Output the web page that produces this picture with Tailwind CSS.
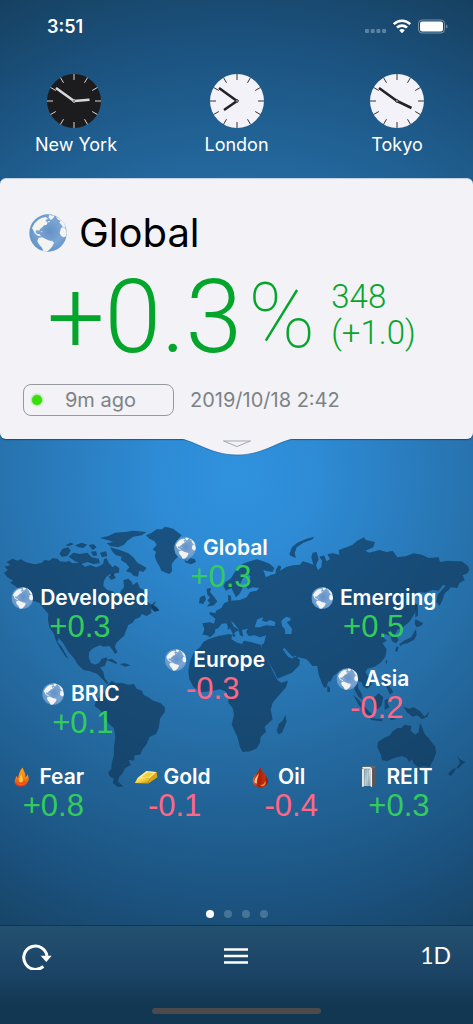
<!DOCTYPE html>
<html lang="en">
<head>
<meta charset="utf-8">
<meta name="viewport" content="width=device-width, initial-scale=1">
<title>Global Markets</title>
<script src="https://cdn.jsdelivr.net/npm/@tailwindcss/browser@4"></script>
</head>
<body class="bg-[#123752]">
<svg width="0" height="0" class="absolute" aria-hidden="true">
  <defs>
    <radialGradient id="sea" cx="55%" cy="45%" r="55%">
      <stop offset="0" stop-color="#6491c6"/><stop offset=".6" stop-color="#7ba6d4"/><stop offset="1" stop-color="#6396c8"/>
    </radialGradient>
    <linearGradient id="flameFill" x1="0" y1="0" x2="0" y2="1"><stop offset="0" stop-color="#f9a21b"/><stop offset=".5" stop-color="#f58a1c"/><stop offset="1" stop-color="#e02a10"/></linearGradient>
    <linearGradient id="goldFront" x1="0" y1="0" x2="1" y2="1"><stop offset="0" stop-color="#fff6a8"/><stop offset=".5" stop-color="#f4cf3a"/><stop offset="1" stop-color="#b8860b"/></linearGradient>
    <linearGradient id="dropFill" x1="0" y1="0" x2="1" y2="0"><stop offset="0" stop-color="#e8622a"/><stop offset=".4" stop-color="#a81c08"/><stop offset=".8" stop-color="#c2330f"/><stop offset="1" stop-color="#7a1204"/></linearGradient>
    <linearGradient id="glass" x1="0" y1="0" x2="1" y2="1"><stop offset="0" stop-color="#8fb4c8"/><stop offset=".5" stop-color="#c8dde6"/><stop offset="1" stop-color="#7d9cab"/></linearGradient>
    <symbol id="globe" viewBox="0 0 114 114">
      <circle cx="57" cy="57" r="56" fill="url(#sea)"/>
      <g fill="#f3f3f2">
        <path d="M9 42 17 28 28 17 38 12 50 9 57 14 49 19 56 26 52 33 45 34 40 40 34 44 30 50 22 48 20 54 24 60 32 61 36 67 26 65 17 58 13 49z"/>
        <path d="M60 3 77 5 73 12 66 18 59 12zM80 7 94 15 105 27 110 41 101 38 96 31 91 25 95 20 87 17zM96 42 104 39 110 45 113 57 110 68 103 70 96 65 92 57z"/>
        <path d="M28 72 39 70 50 75 58 79 71 82 75 87 69 98 61 107 53 113 43 111 39 101 30 91 25 82z"/>
        <path d="M35 51l8 3-6 1zM56 21l7 1-3 4z"/>
      </g>
    </symbol>
    <symbol id="ticks" viewBox="0 0 54 54">
      <g stroke-width="1" fill="none">
        <path d="M27 0v6M27 48v6M0 27h6M48 27h6M13.5 3.600l3 5.200M40.500 3.600l-3 5.200M13.500 50.400l3-5.200M40.500 50.400l-3-5.200M3.600 13.500l5.200 3M3.600 40.500l5.200-3M50.400 13.500l-5.200 3M50.400 40.500l-5.200-3"/>
      </g>
    </symbol>
  </defs>
</svg>

<main class="flex min-h-screen flex-col bg-[radial-gradient(circle_580px_at_50%_475px,#3092de_0%,#2e8bd5_14%,#256ca3_48%,#1c5583_72%,#174467_88%,#123752_100%)] font-['Inter','Liberation_Sans',sans-serif] text-white">

  <header class="flex h-[53px] items-center justify-between pr-[25px] pl-[47px]">
    <time class="text-lg font-semibold">3:51</time>
    <svg class="h-5 w-[84px]" viewBox="0 0 84 20" role="img" aria-label="Wi-Fi on, battery full">
      <g fill="#fff" fill-opacity=".3"><rect x="1" y="12" width="4" height="4" rx="1"/><rect x="6.700" y="12" width="4" height="4" rx="1"/><rect x="12.400" y="12" width="4" height="4" rx="1"/><rect x="18.100" y="12" width="4" height="4" rx="1"/></g>
      <g fill="none" stroke="#fff" stroke-width="2.600"><path d="M29.800 7.200a11.500 11.500 0 0 1 16.400 0M33 10.700a7 7 0 0 1 10 0"/></g>
      <path d="M35.200 13.300a4 4 0 0 1 5.600 0L38 16.200z" fill="#fff"/>
      <rect x="54.500" y="3" width="26" height="13" rx="3.500" fill="none" stroke="#fff" stroke-opacity=".4"/>
      <rect x="56" y="4.500" width="23" height="10" rx="2.200" fill="#fff"/>
      <path d="M82 7.500v4q1.500-.5 1.500-2T82 7.500z" fill="#fff" fill-opacity=".4"/>
    </svg>
  </header>

  <section class="flex h-[125px] justify-between px-[26px] pt-[21px]" aria-label="World clocks">
    <figure class="flex w-[100px] flex-col items-center">
      <svg class="mr-1 size-[54px]" viewBox="0 0 54 54" aria-hidden="true"><circle cx="27" cy="27" r="27" fill="#1c1c1f"/><use href="#ticks" stroke="#d8d8d8"/><path d="M27 27 9 14M27 27l15.500-1.200" stroke="#d9d7dc" stroke-width="2.600"/><circle cx="27" cy="27" r="1.300" fill="#1c1c1f" stroke="#d9d7dc"/></svg>
      <figcaption class="mt-[5px] text-lg leading-6 whitespace-nowrap">New York</figcaption>
    </figure>
    <figure class="flex w-[100px] flex-col items-center">
      <svg class="size-[54px]" viewBox="0 0 54 54" aria-hidden="true"><circle cx="27" cy="27" r="27" fill="#f3f2f8"/><use href="#ticks" stroke="#333"/><path d="M27 27 9 14M27 27 14 36" stroke="#222224" stroke-width="2.600"/><circle cx="27" cy="27" r="1.300" fill="#fff" stroke="#222"/></svg>
      <figcaption class="mt-[5px] text-lg leading-6">London</figcaption>
    </figure>
    <figure class="flex w-[100px] flex-col items-center">
      <svg class="size-[54px]" viewBox="0 0 54 54" aria-hidden="true"><circle cx="27" cy="27" r="27" fill="#f3f2f8"/><use href="#ticks" stroke="#333"/><path d="M27 27 9 14M27 27l14.500 7" stroke="#222224" stroke-width="2.600"/><circle cx="27" cy="27" r="1.300" fill="#fff" stroke="#222"/></svg>
      <figcaption class="mt-[5px] text-lg leading-6">Tokyo</figcaption>
    </figure>
  </section>

  <article class="relative h-[261px] rounded-md border-t border-[#c3d1df] bg-[#f2f2f7] px-[23px] pt-7 shadow-[0_1px_1px_rgba(0,0,0,0.35)]">
    <div class="flex items-center gap-3 pl-[6px]">
      <svg class="size-[38px]" aria-hidden="true"><use href="#globe"/></svg>
      <h1 class="text-[40px] leading-[52px] text-black">Global</h1>
    </div>
    <div class="mt-2 flex h-[100px] items-center pl-6 font-['Roboto','Liberation_Sans',sans-serif] font-light text-[#04a52b]">
      <span class="text-[102px] leading-[100px]">+0.3</span>
      <span class="ml-[6px] text-[90px] leading-[100px] font-thin">%</span>
      <p class="ml-4 pb-1 text-[33px] leading-[36px]"><span class="block">348</span><span class="block">(+1.0)</span></p>
    </div>
    <div class="mt-[17px] flex items-center gap-4 text-xl text-[#7c8386]">
      <button class="relative h-8 w-[151px] rounded-lg border border-[#969a9e] pl-1 leading-none">
        <span class="absolute top-[10px] left-2 size-[10px] rounded-full bg-[#3ade0c] shadow-[0_0_3px_#3ade0c]"></span>9m ago</button>
      <time>2019/10/18 2:42</time>
    </div>
    <button class="absolute top-full left-1/2 -mt-px h-[19px] w-[126px] -translate-x-1/2" aria-label="Expand">
      <svg class="size-full overflow-visible" viewBox="0 0 126 19"><path d="M0 0C20 0 34 17 63 17S106 0 126 0z" fill="#f2f2f7"/><path d="M0 .5C20 .5 34 17 63 17S106 .5 126 .5" fill="none" stroke="#1e5f96" stroke-opacity=".6"/><path d="M0 -1h126v2H0z" fill="#f2f2f7"/><path d="M49.500 3h27L63 8.500z" fill="none" stroke="#a3a7af"/></svg>
    </button>
  </article>

  <section class="flex-1 pt-[71px]" aria-label="Markets">
    <div class="relative">
      <svg class="w-full" viewBox="0 0 473 310" aria-hidden="true">
        <g fill="#0f3556" fill-opacity=".66" fill-rule="evenodd">
          <g transform="scale(.33333)">
            <path d="M12 188 24 180 13 170 32 166 20 156 38 146 52 152 62 148 78 157 105 163 125 158 134 150 148 152 158 144 172 146 180 154 198 156 206 152 218 160 240 158 255 170 270 165 288 172 303 166 310 160 312 148 320 144 326 158 338 172 345 166 358 174 357 188 345 190 336 200 330 192 318 202 312 212 310 228 322 240 338 244 350 254 358 264 364 260 360 246 372 232 370 210 385 206 395 215 398 225 412 216 420 235 432 240 436 252 446 262 438 272 455 284 470 290 478 303 462 304 452 296 455 308 440 318 425 312 420 322 405 328 398 338 385 345 378 362 372 378 362 386 348 400 345 412 352 426 345 432 336 418 328 408 310 410 300 406 280 414 268 425 266 442 272 458 285 464 298 458 305 446 322 442 320 454 314 468 300 472 310 486 314 505 325 518 320 522 308 508 292 492 270 484 250 480 232 462 222 445 210 432 200 418 190 400 176 384 172 396 186 412 196 430 206 446 198 442 186 424 176 408 166 388 162 372 148 352 144 330 145 312 132 296 118 278 90 270 78 256 60 240 46 228 30 218 40 212 22 202z"/>
            <path d="M178 132 188 116 205 112 212 122 202 138 186 140zM206 140 220 128 240 132 262 128 275 142 296 146 300 160 280 162 262 156 245 162 225 154zM196 106 212 98 222 102 208 108zM225 106 245 98 262 104 250 114 235 112zM266 106 280 102 290 112 278 120zM300 84 325 78 345 68 375 66 400 62 440 66 425 76 400 80 382 92 372 104 355 112 330 108 320 100 340 96 322 90zM272 125 288 124 292 136 280 138zM330 112 360 120 385 130 400 142 412 158 425 165 440 174 430 186 418 182 414 200 402 198 392 188 378 184 388 172 378 160 362 150 365 140 348 136 338 126zM300 128 318 124 322 138 306 142zM325 200 340 192 348 204 334 210zM452 286 468 272 462 288 478 300 464 306z"/>
            <path d="M438 76 455 68 470 58 486 58 495 50 520 56 532 66 545 76 534 88 546 96 532 108 540 120 525 130 534 140 524 150 515 162 516 184 508 192 498 188 484 182 478 168 470 155 464 138 468 126 458 118 470 106 464 94 448 86z"/>
            <path d="M552 150 562 154 572 144 585 148 588 156 574 163 558 158zM318 450 335 446 352 458 348 462 330 454zM358 462 375 460 392 466 376 470z"/>
          </g>
          <path transform="translate(0 150) scale(.33333)" d="M322 76 335 62 348 70 365 68 385 74 402 72 410 86 425 92 432 106 445 112 460 122 480 128 495 142 494 156 480 176 476 205 468 222 448 232 440 252 428 268 420 284 404 286 402 302 386 300 392 315 376 324 366 342 358 350 354 364 370 380 352 380 338 368 342 356 330 350 324 336 334 328 335 310 342 285 342 260 346 230 342 205 325 190 312 165 300 150 284 138 288 120 300 112 312 98z"/>
          <g transform="translate(160 50) scale(.33333)">
            <path d="M128 224 133 206 127 190 150 187 162 191 166 176 148 162 150 156 166 160 168 152 184 144 192 130 205 124 204 104 213 108 214 122 240 120 260 112 270 96 290 92 298 84 278 82 264 88 256 78 262 62 272 50 262 40 248 56 240 72 248 84 240 100 228 112 222 100 214 84 198 92 190 78 196 66 212 56 222 40 235 22 252 10 270 4 290 -2 310 4 330 12 343 24 338 36 322 34 310 30 318 52 334 44 346 42 348 28 356 16 364 20 360 32 380 20 400 16 420 14 428 4 444 8 460 14 454 -8 458 -22 470 -24 476 -2 468 16 474 30 484 22 486 2 478 -10 492 -14 500 4 510 -2 502 -18 520 -20 538 -16 536 -30 560 -38 578 -46 592 -58 612 -68 618 -60 645 -54 640 -38 616 -28 628 -22 658 -30 680 -24 698 -28 712 -8 740 -12 760 -20 786 -16 806 -6 836 -8 840 6 862 2 888 4 905 4 924 18 928 30 922 40 908 46 914 60 898 70 892 84 872 82 866 90 854 100 846 124 838 138 829 126 832 106 848 88 858 76 848 76 836 92 818 90 796 98 776 96 758 112 760 128 774 134 764 160 750 184 730 200 712 210 706 222 716 240 708 250 696 244 692 228 676 222 668 230 680 242 668 250 680 268 676 290 662 308 644 320 622 326 616 336 630 356 636 374 622 386 610 380 604 366 594 364 594 384 606 402 608 420 596 412 584 390 580 368 568 352 564 334 552 326 538 334 520 348 512 364 504 366 498 384 490 380 476 344 472 318 458 318 440 298 415 292 398 290 386 278 374 264 368 268 384 290 398 296 404 286 420 300 418 316 396 338 352 356 345 340 325 304 308 272 304 254 312 250 318 226 300 232 284 226 266 228 258 216 264 206 246 210 250 230 240 226 234 206 222 190 212 182 222 200 238 210 226 216 220 224 208 200 198 190 184 192 176 204 166 208 164 220 150 232 140 226zM284 202 292 178 310 172 306 182 318 186 330 180 346 186 344 198 318 196 300 202zM364 182 378 170 392 174 390 182 380 186 396 206 394 222 376 222 374 206 366 198z"/>
            <path d="M140 86 154 84 150 96 160 108 172 124 162 136 140 140 150 128 142 122 150 112 142 104zM120 112 134 106 138 118 130 132 117 130zM203 194h6v14h-6zM214 222l14 2-6 8z"/>
            <path d="M388 -18 396 -38 412 -52 440 -64 462 -70 458 -62 430 -52 410 -38 404 -20 408 -6 392 -12z"/>
            <path d="M144 238 175 228 208 222 216 226 214 238 232 248 246 252 252 242 272 246 302 254 310 275 325 305 338 332 352 360 364 368 384 362 378 382 355 408 338 428 332 450 338 478 314 500 318 515 302 530 300 548 290 565 270 574 248 576 240 562 232 530 215 494 222 464 218 444 205 428 206 410 196 394 180 388 150 394 120 397 100 380 88 358 85 334 90 304 102 276 120 262 130 246z"/>
            <path d="M376 464 380 484 366 518 356 523 350 512 356 492 368 482zM502 376 510 384 510 396 502 396z"/>
            <path d="M766 128 774 144 774 168 766 172zM766 178 776 182 790 190 782 198 770 202 764 192zM768 208 770 224 762 240 742 250 730 252 720 258 718 252 736 240 754 232 762 216zM708 262 716 260 712 276 706 274zM676 304 682 300 680 314z"/>
          </g>
          <g transform="translate(290 90) scale(.33333)">
            <path d="M190 286 204 296 222 318 236 334 250 346 244 352 224 338 206 314zM246 298 266 280 280 292 274 318 262 328 250 318zM284 300 300 294 292 308 298 322 284 330zM240 354 278 358 276 364 244 360zM280 220 288 240 300 262 310 276 300 284 290 262 276 240z"/>
            <path d="M340 320 356 326 372 322 390 334 404 350 418 334 412 350 396 358 382 346 368 350 350 336zM300 350l20 8-18 2z"/>
            <path d="M264 426 262 442 272 462 276 480 290 484 312 474 336 468 350 474 358 486 366 478 370 490 384 502 402 498 418 502 430 480 438 460 436 440 424 426 416 414 404 402 396 380 390 370 386 396 376 404 362 392 364 378 344 374 334 384 322 384 308 394 300 406 282 414z" transform="translate(0 0)"/>
            <path d="M502 468 510 478 526 486 514 496 504 506 500 502 510 488zM500 504 492 516 482 528 474 522 488 508zM382 506l14 4-6 10z"/>
          </g>
        </g>
      </svg>

      <div class="text-[21px] leading-6 font-semibold [text-shadow:0_1px_2px_rgba(0,20,50,0.7)]">
        <button class="absolute top-[26px] left-[46.7%] flex -translate-x-1/2 flex-col items-center">
          <span class="flex items-center gap-[7px]"><svg class="size-[22px]"><use href="#globe"/></svg>Global</span>
          <span class="font-['Liberation_Sans',sans-serif] text-[31px] leading-[34px] font-normal text-[#33cc5a]">+0.3</span>
        </button>
        <button class="absolute top-[76px] left-[16.9%] flex -translate-x-1/2 flex-col items-center">
          <span class="flex items-center gap-[7px]"><svg class="size-[22px]"><use href="#globe"/></svg>Developed</span>
          <span class="font-['Liberation_Sans',sans-serif] text-[31px] leading-[34px] font-normal text-[#33cc5a]">+0.3</span>
        </button>
        <button class="absolute top-[76px] left-[79%] flex -translate-x-1/2 flex-col items-center">
          <span class="flex items-center gap-[7px]"><svg class="size-[22px]"><use href="#globe"/></svg>Emerging</span>
          <span class="font-['Liberation_Sans',sans-serif] text-[31px] leading-[34px] font-normal text-[#33cc5a]">+0.5</span>
        </button>
        <button class="absolute top-[138px] left-[45.4%] flex -translate-x-1/2 flex-col items-center">
          <span class="flex items-center gap-[7px]"><svg class="size-[22px]"><use href="#globe"/></svg>Europe</span>
          <span class="pr-1 font-['Liberation_Sans',sans-serif] text-[31px] leading-[34px] font-normal text-[#ff6785]">-0.3</span>
        </button>
        <button class="absolute top-[172px] left-[17.1%] flex -translate-x-1/2 flex-col items-center">
          <span class="flex items-center gap-[7px]"><svg class="size-[22px]"><use href="#globe"/></svg>BRIC</span>
          <span class="pl-1 font-['Liberation_Sans',sans-serif] text-[31px] leading-[34px] font-normal text-[#33cc5a]">+0.1</span>
        </button>
        <button class="absolute top-[157px] left-[78.8%] flex -translate-x-1/2 flex-col items-center">
          <span class="flex items-center gap-[7px]"><svg class="size-[22px]"><use href="#globe"/></svg>Asia</span>
          <span class="pl-2 font-['Liberation_Sans',sans-serif] text-[31px] leading-[34px] font-normal text-[#ff6785]">-0.2</span>
        </button>
        <button class="absolute top-[255px] left-[10%] flex -translate-x-1/2 flex-col items-center">
          <span class="flex items-center gap-[7px]"><svg class="size-[22px]" viewBox="0 0 63 63"><path d="M36 4C38 14 46 20 43 32 48 30 49 26 49 23 55 34 54 42 48 50 44 57 36 60 29 59 19 58 12 52 13 42 14 36 18 32 19 28 21 30 21 34 22 36 26 26 24 16 36 4z" fill="url(#flameFill)"/><path d="M33 18C31 30 24 34 25 44 27 48 34 49 37 42 38 36 32 32 33 18z" fill="#ffc23c"/><path d="M18 46Q22 55 32 56 44 55 47 44 43 50 34 51 24 52 18 46z" fill="#ff5a26"/></svg>Fear</span>
          <span class="pl-3 font-['Liberation_Sans',sans-serif] text-[31px] leading-[34px] font-normal text-[#33cc5a]">+0.8</span>
        </button>
        <button class="absolute top-[255px] left-[36.500%] flex -translate-x-1/2 flex-col items-center">
          <span class="flex items-center gap-[7px]"><svg class="size-[22px] overflow-visible" viewBox="0 0 63 63"><path d="M8 34 33 14 62 17 64 32 38 50 0 49z" fill="#a87508"/><path d="M8 34 33 14 62 17 42 36z" fill="#fff0a0"/><path d="M8 34 42 36 38 50 0 49z" fill="url(#goldFront)"/><path d="M42 36 62 17 64 32 38 50z" fill="#d9a520"/><path d="M18 32 36 18 54 20 40 33z" fill="#f4cd3c"/></svg>Gold</span>
          <span class="pl-1 font-['Liberation_Sans',sans-serif] text-[31px] leading-[34px] font-normal text-[#ff6785]">-0.1</span>
        </button>
        <button class="absolute top-[255px] left-[58.600%] flex -translate-x-1/2 flex-col items-center">
          <span class="flex items-center gap-[7px]"><svg class="size-[22px]" viewBox="0 0 63 63"><path d="M32 2C34 17 53 28 53 42 53 54 44 61 32 61S10 54 10 42C10 28 29 17 32 2z" fill="url(#dropFill)"/><path d="M15 42C17 32 25 27 27 20 27 32 20 38 22 50 17 50 14 47 15 42z" fill="#ffc69a"/><path d="M28 54Q42 56 47 42 49 54 38 58z" fill="#f08a3c"/></svg>Oil</span>
          <span class="pl-7 font-['Liberation_Sans',sans-serif] text-[31px] leading-[34px] font-normal text-[#ff6785]">-0.4</span>
        </button>
        <button class="absolute top-[255px] left-[83.500%] flex -translate-x-1/2 flex-col items-center">
          <span class="flex items-center gap-[7px]"><svg class="size-[22px]" viewBox="0 0 63 63"><path d="M13 3 20 1 50 1 53 6V50L42 61 37 57 20 57 13 60z" fill="#6e6c6a"/><path d="M13 3 37 3 41 8 17 8z" fill="#f2f2f2"/><path d="M13 8h6v50l-6 2z" fill="#e4e6e6"/><path d="M20 9h17v48H20z" fill="url(#glass)"/><path d="M37 6 42 7V61L37 57z" fill="#f4f5f5"/><path d="M42 7 53 4V50L42 61z" fill="#5c5755"/><path d="M25 9v47M31 9v47" stroke="#789aaa" stroke-width="1.500"/></svg>REIT</span>
          <span class="pl-2 font-['Liberation_Sans',sans-serif] text-[31px] leading-[34px] font-normal text-[#33cc5a]">+0.3</span>
        </button>
      </div>
    </div>
  </section>

  <nav class="flex justify-center gap-[10px] pb-[7px]" aria-label="Pages">
    <button class="size-2 rounded-full bg-white" aria-label="Page 1"></button>
    <button class="size-2 rounded-full bg-white/20" aria-label="Page 2"></button>
    <button class="size-2 rounded-full bg-white/20" aria-label="Page 3"></button>
    <button class="size-2 rounded-full bg-white/20" aria-label="Page 4"></button>
  </nav>

  <footer class="flex h-[99px] flex-col items-center justify-between border-t border-[#133750] bg-linear-to-b from-[#24506f] via-[#1a4365] via-50% to-[#123752] to-80% pb-[10px]">
    <div class="flex h-[59px] w-full items-center justify-between px-[22px]">
      <button aria-label="Refresh"><svg class="h-7 w-[30px]" viewBox="0 0 90 84"><path d="M64 73A35 35 0 1 1 75 42" fill="none" stroke="#fff" stroke-width="9"/><path d="M56 41H89L73 60z" fill="#fff"/></svg></button>
      <button aria-label="Menu"><svg class="h-[18px] w-6" viewBox="0 0 24 18"><path d="M0 2.500h24M0 9h24M0 15.500h24" stroke="#fff" stroke-width="2.600"/></svg></button>
      <button class="font-['Lato','Liberation_Sans',sans-serif] text-[23px]">1D</button>
    </div>
    <div class="h-[6px] w-[169px] rounded-full bg-[#4c4a4a]"></div>
  </footer>
</main>
</body>
</html>
